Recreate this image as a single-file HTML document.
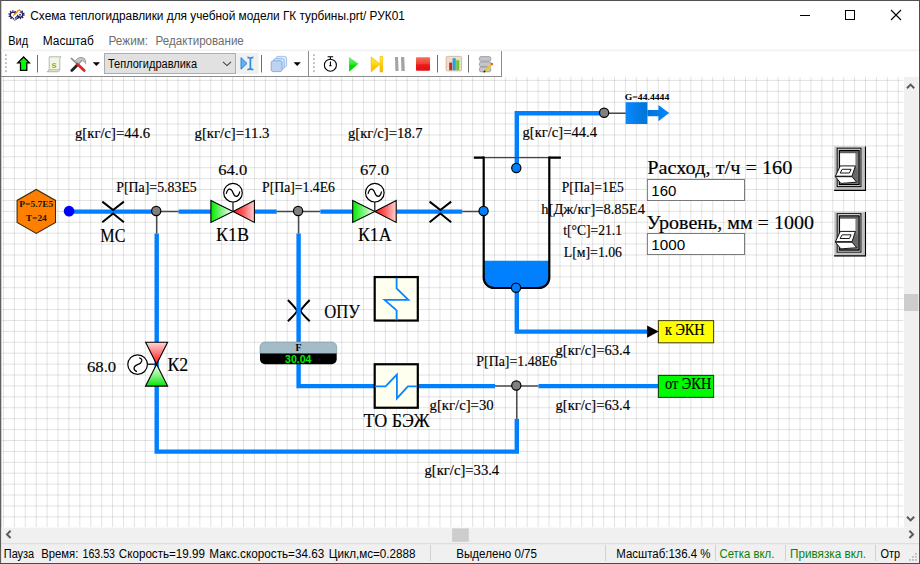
<!DOCTYPE html>
<html><head><meta charset="utf-8"><title>schema</title>
<style>
html,body{margin:0;padding:0;background:#fff;overflow:hidden;}
body{width:920px;height:564px;position:relative;font-family:"Liberation Sans",sans-serif;}
svg{position:absolute;left:0;top:0;display:block;}
text{white-space:pre;}
.ui{font-family:"Liberation Sans",sans-serif;font-size:12px;fill:#000;}
.sf{font-family:"Liberation Serif",serif;fill:#000;stroke:#000;stroke-width:0.16px;}
</style></head><body>
<svg width="920" height="564" viewBox="0 0 920 564">
<defs>
<linearGradient id="gG" x1="0" y1="0" x2="1" y2="0"><stop offset="0" stop-color="#00ea00"/><stop offset="0.5" stop-color="#84f484"/><stop offset="1" stop-color="#ffffff"/></linearGradient>
<linearGradient id="gR" x1="0" y1="0" x2="1" y2="0"><stop offset="0" stop-color="#ff1010"/><stop offset="0.5" stop-color="#ff6262"/><stop offset="1" stop-color="#ffd6d6"/></linearGradient>
<linearGradient id="gGv" x1="0" y1="0" x2="0" y2="1"><stop offset="0" stop-color="#ffffff"/><stop offset="0.5" stop-color="#8cf48c"/><stop offset="1" stop-color="#00e600"/></linearGradient>
<linearGradient id="gRv" x1="0" y1="0" x2="0" y2="1"><stop offset="0" stop-color="#ffd8d8"/><stop offset="0.55" stop-color="#ff6a6a"/><stop offset="1" stop-color="#ff1010"/></linearGradient>
<linearGradient id="gB" x1="0" y1="0" x2="1" y2="0"><stop offset="0" stop-color="#0a88ff"/><stop offset="1" stop-color="#0074d6"/></linearGradient>
<linearGradient id="gB2" x1="0" y1="0" x2="1" y2="0"><stop offset="0" stop-color="#0074d6"/><stop offset="1" stop-color="#0a88ff"/></linearGradient>
<linearGradient id="gP" x1="0" y1="0" x2="0" y2="1"><stop offset="0" stop-color="#7cf47c"/><stop offset="0.5" stop-color="#30e830"/><stop offset="0.55" stop-color="#00e000"/><stop offset="1" stop-color="#00cc00"/></linearGradient>
<linearGradient id="gY" x1="0" y1="0" x2="0" y2="1"><stop offset="0" stop-color="#ffe640"/><stop offset="0.5" stop-color="#ffd810"/><stop offset="0.55" stop-color="#ffcc00"/><stop offset="1" stop-color="#f8b800"/></linearGradient>
<linearGradient id="gS" x1="0" y1="0" x2="0" y2="1"><stop offset="0" stop-color="#f4705c"/><stop offset="0.5" stop-color="#ee4030"/><stop offset="0.55" stop-color="#ea1c1c"/><stop offset="1" stop-color="#e01010"/></linearGradient>
<clipPath id="cv"><rect x="2" y="77" width="901.5" height="450"/></clipPath>
</defs>

<rect x="0" y="0" width="920" height="564" fill="#ffffff"/>
<g clip-path="url(#cv)" shape-rendering="auto">
<path d="M3.45 77V527M14.36 77V527M25.27 77V527M36.19 77V527M47.10 77V527M58.01 77V527M68.92 77V527M79.83 77V527M90.75 77V527M101.66 77V527M112.57 77V527M123.48 77V527M134.39 77V527M145.31 77V527M156.22 77V527M167.13 77V527M178.04 77V527M188.95 77V527M199.87 77V527M210.78 77V527M221.69 77V527M232.60 77V527M243.51 77V527M254.43 77V527M265.34 77V527M276.25 77V527M287.16 77V527M298.07 77V527M308.99 77V527M319.90 77V527M330.81 77V527M341.72 77V527M352.63 77V527M363.55 77V527M374.46 77V527M385.37 77V527M396.28 77V527M407.19 77V527M418.11 77V527M429.02 77V527M439.93 77V527M450.84 77V527M461.75 77V527M472.67 77V527M483.58 77V527M494.49 77V527M505.40 77V527M516.31 77V527M527.23 77V527M538.14 77V527M549.05 77V527M559.96 77V527M570.87 77V527M581.79 77V527M592.70 77V527M603.61 77V527M614.52 77V527M625.43 77V527M636.35 77V527M647.26 77V527M658.17 77V527M669.08 77V527M679.99 77V527M690.91 77V527M701.82 77V527M712.73 77V527M723.64 77V527M734.55 77V527M745.47 77V527M756.38 77V527M767.29 77V527M778.20 77V527M789.11 77V527M800.03 77V527M810.94 77V527M821.85 77V527M832.76 77V527M843.67 77V527M854.59 77V527M865.50 77V527M876.41 77V527M887.32 77V527M898.23 77V527" stroke="#000" stroke-opacity="0.115" stroke-width="1" fill="none"/>
<path d="M2 80.40H903.5M2 91.31H903.5M2 102.22H903.5M2 113.14H903.5M2 124.05H903.5M2 134.96H903.5M2 145.87H903.5M2 156.78H903.5M2 167.70H903.5M2 178.61H903.5M2 189.52H903.5M2 200.43H903.5M2 211.34H903.5M2 222.26H903.5M2 233.17H903.5M2 244.08H903.5M2 254.99H903.5M2 265.90H903.5M2 276.82H903.5M2 287.73H903.5M2 298.64H903.5M2 309.55H903.5M2 320.46H903.5M2 331.38H903.5M2 342.29H903.5M2 353.20H903.5M2 364.11H903.5M2 375.02H903.5M2 385.94H903.5M2 396.85H903.5M2 407.76H903.5M2 418.67H903.5M2 429.58H903.5M2 440.50H903.5M2 451.41H903.5M2 462.32H903.5M2 473.23H903.5M2 484.14H903.5M2 495.06H903.5M2 505.97H903.5M2 516.88H903.5M2 527.79H903.5" stroke="#000" stroke-opacity="0.115" stroke-width="1" fill="none"/>
<path d="M287.9 300.0Q296.4 308.8 296.9 310.6T287.9 321.2M309.7 300.0Q301.2 308.8 300.7 310.6T309.7 321.2" stroke="#000" stroke-width="2.0" fill="none"/>
<path d="M69.4 211.6H152.7" stroke="#0080ff" stroke-width="4.4" fill="none" stroke-linejoin="miter"/>
<path d="M156.7 211.6H178.5" stroke="#484848" stroke-width="1.5" fill="none"/>
<path d="M178.5 211.6H211.3" stroke="#0080ff" stroke-width="4.4" fill="none" stroke-linejoin="miter"/>
<path d="M254.9 211.6H276.7" stroke="#0080ff" stroke-width="4.4" fill="none" stroke-linejoin="miter"/>
<path d="M276.7 211.6H320.4" stroke="#484848" stroke-width="1.5" fill="none"/>
<path d="M320.4 211.6H353.1" stroke="#0080ff" stroke-width="4.4" fill="none" stroke-linejoin="miter"/>
<path d="M396.8 211.6H462.2" stroke="#0080ff" stroke-width="4.4" fill="none" stroke-linejoin="miter"/>
<path d="M462.2 211.6H484.1" stroke="#484848" stroke-width="1.5" fill="none"/>
<path d="M156.7 211.6V233.4" stroke="#484848" stroke-width="1.5" fill="none"/>
<path d="M156.7 233.4V451.6H516.8V418.9" stroke="#0080ff" stroke-width="4.4" fill="none" stroke-linejoin="miter"/>
<path d="M516.8 418.9V386.1" stroke="#484848" stroke-width="1.5" fill="none"/>
<path d="M298.6 211.6V233.4" stroke="#484848" stroke-width="1.5" fill="none"/>
<path d="M298.6 233.4V386.1H375.4" stroke="#0080ff" stroke-width="4.4" fill="none" stroke-linejoin="miter"/>
<path d="M417.6 386.1H495.0" stroke="#0080ff" stroke-width="4.4" fill="none" stroke-linejoin="miter"/>
<path d="M495.0 386.1H538.6" stroke="#484848" stroke-width="1.5" fill="none"/>
<path d="M538.6 386.1H658.7" stroke="#0080ff" stroke-width="4.4" fill="none" stroke-linejoin="miter"/>
<path d="M516.8 167.9V113.3H600.1" stroke="#0080ff" stroke-width="4.4" fill="none" stroke-linejoin="miter"/>
<path d="M604.1 113.3H625.9" stroke="#484848" stroke-width="1.5" fill="none"/>
<path d="M516.8 287.9V331.6H647.7" stroke="#0080ff" stroke-width="4.4" fill="none" stroke-linejoin="miter"/>
<path d="M483.7 260.7H549.3V277.5A10.5 10.5 0 0 1 538.8 288.0H494.2A10.5 10.5 0 0 1 483.7 277.5Z" fill="#0080ff"/>
<path d="M473.9 157.6H560.8" stroke="#444" stroke-width="1.1" fill="none"/>
<path d="M473.9 157.6H483.7M549.3 157.6H560.8" stroke="#000" stroke-width="2.2" fill="none"/>
<path d="M483.7 156.5V277.5A10.5 10.5 0 0 0 494.2 288.0H538.8A10.5 10.5 0 0 0 549.3 277.5V156.5" stroke="#000" stroke-width="2.2" fill="none"/>
<path d="M102.3 201.6L113.1 210.1L123.9 201.6M102.3 222.2L113.1 213.5L123.9 222.2" stroke="#000" stroke-width="2.0" fill="none" stroke-linejoin="miter"/>
<path d="M429.6 201.6L440.4 210.1L451.2 201.6M429.6 222.2L440.4 213.5L451.2 222.2" stroke="#000" stroke-width="2.0" fill="none" stroke-linejoin="miter"/>
<circle cx="69.1" cy="211.2" r="5.35" fill="#0000ff"/>
<circle cx="156.2" cy="211.0" r="4.6" fill="#808080" stroke="#000" stroke-width="1.2"/>
<circle cx="298.1" cy="211.0" r="4.6" fill="#808080" stroke="#000" stroke-width="1.2"/>
<circle cx="483.6" cy="211.0" r="4.6" fill="#0080ff" stroke="#000" stroke-width="1.2"/>
<circle cx="516.3" cy="168.0" r="4.6" fill="#0080ff" stroke="#000" stroke-width="1.2"/>
<circle cx="516.0" cy="287.8" r="4.6" fill="#0080ff" stroke="#000" stroke-width="1.2"/>
<circle cx="604.1" cy="112.7" r="4.6" fill="#808080" stroke="#000" stroke-width="1.2"/>
<circle cx="516.3" cy="385.5" r="4.6" fill="#808080" stroke="#000" stroke-width="1.2"/>
<path d="M233.0 211.4V201.9" stroke="#000" stroke-width="1.1"/>
<path d="M210.9 200.4L233.0 211.4L210.9 222.4Z" fill="url(#gG)" stroke="#000" stroke-width="1.1" stroke-linejoin="miter"/>
<path d="M254.4 200.4L233.0 211.4L254.4 222.4Z" fill="url(#gR)" stroke="#000" stroke-width="1.1" stroke-linejoin="miter"/>
<circle cx="233.0" cy="192.7" r="9.3" fill="#fff" stroke="#000" stroke-width="1.2"/>
<path d="M226.2 193.9C227.8 187.2 231.4 188.1 233.0 192.7S238.2 198.2 239.8 191.5" stroke="#000" stroke-width="1.2" fill="none"/>
<path d="M374.8 211.4V201.9" stroke="#000" stroke-width="1.1"/>
<path d="M352.7 200.4L374.8 211.4L352.7 222.4Z" fill="url(#gG)" stroke="#000" stroke-width="1.1" stroke-linejoin="miter"/>
<path d="M396.2 200.4L374.8 211.4L396.2 222.4Z" fill="url(#gR)" stroke="#000" stroke-width="1.1" stroke-linejoin="miter"/>
<circle cx="374.8" cy="192.7" r="9.3" fill="#fff" stroke="#000" stroke-width="1.2"/>
<path d="M368.0 193.9C369.6 187.2 373.2 188.1 374.8 192.7S380.0 198.2 381.6 191.5" stroke="#000" stroke-width="1.2" fill="none"/>
<path d="M156.6 364.2H147.1" stroke="#000" stroke-width="1.2"/>
<path d="M145.6 342.3L156.6 364.2L167.6 342.3Z" fill="url(#gRv)" stroke="#000" stroke-width="1.1"/>
<path d="M145.6 386.1L156.6 364.2L167.6 386.1Z" fill="url(#gGv)" stroke="#000" stroke-width="1.1"/>
<circle cx="137.6" cy="364.6" r="9.8" fill="#fff" stroke="#000" stroke-width="1.2"/>
<path d="M139.2 357.8C143.8 359.0 141.8 363.4 137.6 364.6S132.6 370.2 137.0 371.6" stroke="#000" stroke-width="1.2" fill="none"/>
<path d="M36.3 189.4L55.5 200.4V222.4L36.3 233.4L17.1 222.4V200.4Z" fill="#ff8000" stroke="#3a2a10" stroke-width="1.1"/>
<rect x="625.6" y="102.2" width="21.8" height="21.8" fill="url(#gB)"/>
<path d="M647.4 109.9H658.4V104.9L669.2 113.1L658.4 121.3V116.3H647.4Z" fill="url(#gB2)"/>
<rect x="374.70" y="277.05" width="43.1" height="43.5" fill="#fffff0" stroke="#000" stroke-width="2.2"/>
<path d="M396.6 277.8V288.4L408.4 299.9H384.6L396.6 310.4V320.3" stroke="#0a84ff" stroke-width="1.8" fill="none"/>
<rect x="374.70" y="364.25" width="43.1" height="43.5" fill="#fffff0" stroke="#000" stroke-width="2.2"/>
<path d="M375.2 386.4H385.6L396.9 374.6V398.4L407.9 386.4H417.2" stroke="#0a84ff" stroke-width="1.8" fill="none"/>
<path d="M265.0 342.1H331.7A5 5 0 0 1 336.7 347.1V353.5H260.0V347.1A5 5 0 0 1 265.0 342.1Z" fill="#a3bcc8" stroke="#8399a3" stroke-width="0.7"/>
<path d="M260.0 353.5H336.7V359.2A5 5 0 0 1 331.7 364.2H265.0A5 5 0 0 1 260.0 359.2Z" fill="#000"/>
<rect x="658.4" y="320.6" width="55.2" height="22.2" fill="#ffff00" stroke="#4a4a10" stroke-width="1.1"/>
<rect x="658.4" y="375.4" width="55.2" height="22.0" fill="#00fa00" stroke="#0c4a0c" stroke-width="1.1"/>
<path d="M647.1 325.4L658.7 331.6L647.1 337.8Z" fill="#000"/>
<rect x="647.4" y="179.5" width="97.1" height="21.0" fill="#fff" stroke="#7a7a7a" stroke-width="1"/>
<rect x="647.4" y="233.5" width="97.1" height="21.0" fill="#fff" stroke="#7a7a7a" stroke-width="1"/>
<rect x="834.10" y="146.40" width="31.9" height="44.5" fill="#c0c0c0"/>
<polyline points="834.50,190.40 834.50,146.80 865.50,146.80" fill="none" stroke="#d8d8d8" stroke-width="0.8"/>
<polyline points="834.10,190.40 865.50,190.40 865.50,146.40" fill="none" stroke="#000" stroke-width="1.1"/>
<rect x="837.20" y="148.20" width="23.7" height="38.4" fill="#fff" stroke="#000" stroke-width="1.0"/>
<rect x="839.30" y="150.40" width="19.8" height="34.2" fill="#808080" stroke="#000" stroke-width="1.3"/>
<rect x="840.10" y="151.10" width="17.6" height="2.2" fill="#5e5e5e"/>
<polygon points="840.10,153.30 855.40,153.30 855.40,166.00 840.10,166.00" fill="#fff"/>
<polygon points="855.40,165.90 858.10,171.20 858.10,182.80 852.10,176.40" fill="#6a6a6a"/>
<polygon points="840.30,165.90 855.40,165.90 852.00,176.20 835.40,176.20" fill="#fff" stroke="#000" stroke-width="0.9" stroke-linejoin="round"/>
<polygon points="842.20,169.30 851.10,169.30 849.40,173.00 840.10,173.00" fill="#fff" stroke="#000" stroke-width="0.9"/>
<polygon points="835.40,176.70 852.00,176.70 856.70,182.20 840.90,183.40" fill="#fff" stroke="#000" stroke-width="0.9" stroke-linejoin="round"/>
<rect x="834.10" y="211.90" width="31.9" height="44.5" fill="#c0c0c0"/>
<polyline points="834.50,255.90 834.50,212.30 865.50,212.30" fill="none" stroke="#d8d8d8" stroke-width="0.8"/>
<polyline points="834.10,255.90 865.50,255.90 865.50,211.90" fill="none" stroke="#000" stroke-width="1.1"/>
<rect x="837.20" y="213.70" width="23.7" height="38.4" fill="#fff" stroke="#000" stroke-width="1.0"/>
<rect x="839.30" y="215.90" width="19.8" height="34.2" fill="#808080" stroke="#000" stroke-width="1.3"/>
<rect x="840.10" y="216.60" width="17.6" height="2.2" fill="#5e5e5e"/>
<polygon points="840.10,218.80 855.40,218.80 855.40,231.50 840.10,231.50" fill="#fff"/>
<polygon points="855.40,231.40 858.10,236.70 858.10,248.30 852.10,241.90" fill="#6a6a6a"/>
<polygon points="840.30,231.40 855.40,231.40 852.00,241.70 835.40,241.70" fill="#fff" stroke="#000" stroke-width="0.9" stroke-linejoin="round"/>
<polygon points="842.20,234.80 851.10,234.80 849.40,238.50 840.10,238.50" fill="#fff" stroke="#000" stroke-width="0.9"/>
<polygon points="835.40,242.20 852.00,242.20 856.70,247.70 840.90,248.90" fill="#fff" stroke="#000" stroke-width="0.9" stroke-linejoin="round"/>
<text class="sf" x="75.0" y="137.5" font-size="14.7" textLength="75.0" lengthAdjust="spacingAndGlyphs">g[кг/с]=44.6</text>
<text class="sf" x="194.5" y="137.5" font-size="14.7" textLength="75.0" lengthAdjust="spacingAndGlyphs">g[кг/с]=11.3</text>
<text class="sf" x="348.0" y="137.5" font-size="14.7" textLength="74.5" lengthAdjust="spacingAndGlyphs">g[кг/с]=18.7</text>
<text class="sf" x="522.5" y="137.3" font-size="14.7" textLength="74.5" lengthAdjust="spacingAndGlyphs">g[кг/с]=44.4</text>
<text class="sf" x="116.3" y="192.0" font-size="14.7" textLength="80.5" lengthAdjust="spacingAndGlyphs">P[Па]=5.83E5</text>
<text class="sf" x="262.0" y="192.0" font-size="14.7" textLength="73.0" lengthAdjust="spacingAndGlyphs">P[Па]=1.4E6</text>
<text class="sf" x="561.8" y="191.8" font-size="14.7" textLength="62.0" lengthAdjust="spacingAndGlyphs">P[Па]=1E5</text>
<text class="sf" x="541.3" y="213.8" font-size="14.7" textLength="103.7" lengthAdjust="spacingAndGlyphs">h[Дж/кг]=8.85E4</text>
<text class="sf" x="563.3" y="235.0" font-size="14.7" textLength="58.7" lengthAdjust="spacingAndGlyphs">t[°C]=21.1</text>
<text class="sf" x="563.8" y="256.8" font-size="14.7" textLength="58.2" lengthAdjust="spacingAndGlyphs">L[м]=1.06</text>
<text class="sf" x="555.5" y="355.0" font-size="14.7" textLength="74.5" lengthAdjust="spacingAndGlyphs">g[кг/с]=63.4</text>
<text class="sf" x="555.5" y="410.0" font-size="14.7" textLength="74.5" lengthAdjust="spacingAndGlyphs">g[кг/с]=63.4</text>
<text class="sf" x="476.3" y="365.7" font-size="14.7" textLength="80.7" lengthAdjust="spacingAndGlyphs">P[Па]=1.48E6</text>
<text class="sf" x="429.5" y="410.0" font-size="14.7" textLength="64.2" lengthAdjust="spacingAndGlyphs">g[кг/с]=30</text>
<text class="sf" x="424.5" y="474.5" font-size="14.7" textLength="74.7" lengthAdjust="spacingAndGlyphs">g[кг/с]=33.4</text>
<text class="sf" x="218.2" y="174.7" font-size="15.2" textLength="29.0" lengthAdjust="spacingAndGlyphs">64.0</text>
<text class="sf" x="360.0" y="174.8" font-size="15.2" textLength="29.1" lengthAdjust="spacingAndGlyphs">67.0</text>
<text class="sf" x="87.0" y="371.8" font-size="15.2" textLength="29.2" lengthAdjust="spacingAndGlyphs">68.0</text>
<text class="sf" x="100.3" y="242.2" font-size="19.3" textLength="25.1" lengthAdjust="spacingAndGlyphs">МС</text>
<text class="sf" x="216.0" y="241.2" font-size="19.3" textLength="33.1" lengthAdjust="spacingAndGlyphs">К1В</text>
<text class="sf" x="358.0" y="241.1" font-size="19.3" textLength="33.6" lengthAdjust="spacingAndGlyphs">К1А</text>
<text class="sf" x="167.4" y="370.7" font-size="19.3" textLength="20.8" lengthAdjust="spacingAndGlyphs">К2</text>
<text class="sf" x="324.3" y="317.5" font-size="19.3" textLength="35.8" lengthAdjust="spacingAndGlyphs">ОПУ</text>
<text class="sf" x="363.4" y="426.8" font-size="19.3" textLength="66.2" lengthAdjust="spacingAndGlyphs">ТО БЭЖ</text>
<text class="sf" x="647.2" y="174.3" font-size="19.0" textLength="145.2" lengthAdjust="spacingAndGlyphs">Расход, т/ч = 160</text>
<text class="sf" x="646.6" y="229.3" font-size="19.0" textLength="167.4" lengthAdjust="spacingAndGlyphs">Уровень, мм = 1000</text>
<text class="sf" x="665.0" y="335.2" font-size="15.7" textLength="39.5" lengthAdjust="spacingAndGlyphs">к ЭКН</text>
<text class="sf" x="665.0" y="389.2" font-size="15.7" textLength="46.3" lengthAdjust="spacingAndGlyphs">от ЭКН</text>
<text class="sf" x="624.8" y="100.0" font-size="8.4" textLength="44.5" lengthAdjust="spacingAndGlyphs" font-weight="bold" style="stroke:none">G=44.4444</text>
<text class="sf" x="36.3" y="207.0" font-size="8.6" textLength="34.0" lengthAdjust="spacingAndGlyphs" text-anchor="middle" font-weight="bold" style="stroke:none;fill:#1a1208">P=5.7E5</text>
<text class="sf" x="36.3" y="220.8" font-size="8.6" textLength="21.0" lengthAdjust="spacingAndGlyphs" text-anchor="middle" font-weight="bold" style="stroke:none;fill:#1a1208">T=24</text>
<text class="sf" x="298.5" y="350.9" font-size="9.8" text-anchor="middle" font-weight="bold" style="stroke:none">F</text>
<text x="298.2" y="363.0" font-family="Liberation Sans" font-weight="bold" font-size="10.4" fill="#00ee00" text-anchor="middle" textLength="26.3" lengthAdjust="spacingAndGlyphs">30.04</text>
<text class="ui" x="651.3" y="195.6" textLength="25" lengthAdjust="spacingAndGlyphs" style="font-size:15.2px">160</text>
<text class="ui" x="651.3" y="249.6" textLength="33.8" lengthAdjust="spacingAndGlyphs" style="font-size:15.2px">1000</text>
</g>
<rect x="0" y="0" width="920" height="1" fill="#505050"/>
<rect x="0" y="0" width="1" height="564" fill="#5e5e5e"/>
<rect x="1" y="1" width="0.5" height="562" fill="#9a9a9a"/>
<rect x="919" y="0" width="1" height="564" fill="#4c4c4c"/>
<rect x="0" y="563" width="920" height="1" fill="#4a4a4a"/>
<g>
<circle cx="13.0" cy="14.9" r="3.9" fill="none" stroke="#1c1c5c" stroke-width="1.5" stroke-dasharray="1.25 1.2"/>
<circle cx="20.0" cy="14.6" r="3.9" fill="none" stroke="#1c1c5c" stroke-width="1.5" stroke-dasharray="1.25 1.2"/>
<circle cx="13.0" cy="14.9" r="2.7" fill="none" stroke="#1c1c5c" stroke-width="1.3"/>
<circle cx="20.0" cy="14.6" r="2.7" fill="none" stroke="#1c1c5c" stroke-width="1.3"/>
<circle cx="20.0" cy="14.6" r="0.9" fill="#1c1c5c"/>
<path d="M12.6 17.2L19.2 10.2L20.6 11.6L14.2 18.6Z" fill="#fff"/>
<path d="M13.2 15.6L19.8 9.4" stroke="#ff8c00" stroke-width="1.25"/>
<path d="M14.2 20.4L19.4 15.4M15.6 20.2L20.4 15.8" stroke="#1c1c5c" stroke-width="0.8"/>
</g>
<text class="ui" x="30.3" y="19.6" textLength="374.5" lengthAdjust="spacingAndGlyphs">Схема теплогидравлики для учебной модели ГК турбины.prt/ РУК01</text>
<path d="M800 15.5H810" stroke="#000" stroke-width="1"/>
<rect x="845.5" y="10.5" width="9" height="9" fill="none" stroke="#000" stroke-width="1"/>
<path d="M891 10L901 20M901 10L891 20" stroke="#000" stroke-width="1.1"/>
<text class="ui" x="8.3" y="44.5" textLength="19.8" lengthAdjust="spacingAndGlyphs">Вид</text>
<text class="ui" x="42.8" y="44.5" textLength="51" lengthAdjust="spacingAndGlyphs">Масштаб</text>
<text class="ui" x="108.5" y="44.5" textLength="39.6" lengthAdjust="spacingAndGlyphs" style="fill:#6d6d6d">Режим:</text>
<text class="ui" x="155.6" y="44.5" textLength="88.2" lengthAdjust="spacingAndGlyphs" style="fill:#6d6d6d">Редактирование</text>
<rect x="1" y="49.6" width="918" height="1.5" fill="#f0f0f0"/>
<path d="M1 76.5H502M308.5 51V76M501.5 51V76" stroke="#8c8c8c" stroke-width="1" fill="none"/>
<rect x="5" y="54.3" width="1.8" height="1.8" fill="#b8b8b8"/>
<rect x="5" y="58.3" width="1.8" height="1.8" fill="#b8b8b8"/>
<rect x="5" y="62.3" width="1.8" height="1.8" fill="#b8b8b8"/>
<rect x="5" y="66.3" width="1.8" height="1.8" fill="#b8b8b8"/>
<rect x="5" y="70.3" width="1.8" height="1.8" fill="#b8b8b8"/>
<rect x="313" y="54.3" width="1.8" height="1.8" fill="#b8b8b8"/>
<rect x="313" y="58.3" width="1.8" height="1.8" fill="#b8b8b8"/>
<rect x="313" y="62.3" width="1.8" height="1.8" fill="#b8b8b8"/>
<rect x="313" y="66.3" width="1.8" height="1.8" fill="#b8b8b8"/>
<rect x="313" y="70.3" width="1.8" height="1.8" fill="#b8b8b8"/>
<path d="M37.5 55V72.5" stroke="#6e6e6e" stroke-width="1"/>
<path d="M261.5 55V72.5" stroke="#6e6e6e" stroke-width="1"/>
<path d="M437.5 55V72.5" stroke="#6e6e6e" stroke-width="1"/>
<path d="M468.5 55V72.5" stroke="#6e6e6e" stroke-width="1"/>
<path d="M23.6 57L29.4 62.8H26.8V70.3H20.5V62.8H17.8Z" fill="#00ff00" stroke="#000" stroke-width="1.3" stroke-linejoin="miter"/>
<g>
<path d="M49.2 56.8H61Q59.8 58 59.8 59.6V69.4Q59.8 70.8 58.6 71.6H47.4Q49.2 70.6 49.2 69Z" fill="#f1f6e8" stroke="#a9b79a" stroke-width="0.9"/>
<path d="M47 71.7H58.4Q59.9 70.9 59.7 69.6H49.2Q49 71 47 71.7Z" fill="#dbe5cd" stroke="#a9b79a" stroke-width="0.7"/>
<text x="51.4" y="68" font-family="Liberation Sans" font-size="9" fill="#a0a832" font-weight="bold">s</text>
</g>
<g stroke-linecap="round">
<path d="M71.4 58.4L77.6 64.4" stroke="#8c8c8c" stroke-width="1.5"/>
<path d="M71.8 70.4L77.8 64.4" stroke="#222" stroke-width="2.8"/>
<path d="M77.8 64.4L81 61" stroke="#8e8e8e" stroke-width="1.8"/>
<path d="M77.6 64.2L84.2 70.6" stroke="#d82a2a" stroke-width="2.8"/>
<path d="M75.6 60.2Q79.6 55.4 84.6 58.6Q86 60.4 85.6 63.6Q84.2 60.2 81.4 60.6L78.8 63.2Z" fill="#c4c4c4" stroke="#8a8a8a" stroke-width="0.7" stroke-linejoin="round"/>
</g>
<path d="M92.8 62.2H100L96.4 66Z" fill="#000"/>
<rect x="104.5" y="53.5" width="131" height="20" fill="#e1e1e1" stroke="#adadad" stroke-width="1"/>
<text class="ui" x="108" y="67.6" textLength="89" lengthAdjust="spacingAndGlyphs">Теплогидравлика</text>
<path d="M223 61.8L227 65.6L231 61.8" stroke="#404040" stroke-width="1.1" fill="none"/>
<rect x="236.2" y="53" width="22.5" height="21" fill="#f0f0f0"/>
<path d="M241 57.6L247 63.4L241 69.2Z" fill="#62b0ee" stroke="#1f7fd6" stroke-width="0.9"/>
<path d="M247.4 57.4Q249.6 57.4 250.4 58.6Q251.2 57.4 253.4 57.4M247.4 69.6Q249.6 69.6 250.4 68.4Q251.2 69.6 253.4 69.6M250.4 58.6V68.4" stroke="#2c8ae0" stroke-width="1.7" fill="none"/>
<g>
<rect x="276" y="56.4" width="10.6" height="10.6" rx="2" fill="#e2ecf9" stroke="#9bbce6" stroke-width="0.9"/>
<rect x="273.6" y="58.6" width="10.6" height="10.6" rx="2" fill="#d2e2f6" stroke="#8fb4e4" stroke-width="0.9"/>
<rect x="271.2" y="60.8" width="10.8" height="10.8" rx="2" fill="#bcd4f2" stroke="#7fa8e0" stroke-width="0.9"/>
</g>
<path d="M293.6 62.2H300.8L297.2 66Z" fill="#000"/>
<circle cx="330.4" cy="65.2" r="6.0" fill="#fff" stroke="#000" stroke-width="1.1"/>
<path d="M327.6 56.8H333.2M330.4 57V59.2M330.4 61.4V65.6M329.2 65.8H331.6" stroke="#000" stroke-width="1.1" fill="none"/>
<path d="M348.9 56.8L358.4 63.8L349.2 71.8Z" fill="url(#gP)"/>
<path d="M371 56.8L380.2 64L371.2 72Z" fill="url(#gY)" stroke="#eeb000" stroke-width="0.5"/>
<rect x="380" y="56.6" width="2.8" height="15.4" fill="url(#gY)" stroke="#eeb000" stroke-width="0.5"/>
<path d="M395 57H398L398.6 71H395.4Z" fill="#a4a4a4"/><path d="M401 57H404.2L404.8 71H401.4Z" fill="#a4a4a4"/>
<rect x="416" y="57.2" width="14" height="13.6" rx="1" fill="url(#gS)"/>
<g>
<rect x="446.2" y="56.4" width="15.4" height="14.4" rx="1" fill="#efe4d2" stroke="#c8ac8c" stroke-width="0.8"/>
<path d="M447 59H461M447 61.5H461M447 64H461M447 66.5H461" stroke="#dccbb0" stroke-width="0.6"/>
<rect x="449.2" y="62.6" width="3" height="7.6" fill="#d81e2a"/>
<rect x="452.6" y="58.2" width="3.2" height="12" fill="#28a0e6"/>
<rect x="456.2" y="60.2" width="3" height="10" fill="#6cc832"/>
</g>
<g>
<rect x="479.4" y="56.6" width="11.4" height="4.6" rx="1.6" fill="#c4c6cc" stroke="#8c8e94" stroke-width="0.7"/>
<rect x="479.4" y="61.9" width="11.4" height="4.6" rx="1.6" fill="#c4c6cc" stroke="#8c8e94" stroke-width="0.7"/>
<rect x="479.4" y="67.2" width="11.4" height="4.6" rx="1.6" fill="#c4c6cc" stroke="#8c8e94" stroke-width="0.7"/>
<path d="M484.4 71.4L491.4 64.4" stroke="#e8c63c" stroke-width="2.2"/>
<path d="M491.2 64.6L492.6 63.2" stroke="#e64646" stroke-width="2.2"/>
<path d="M483.6 72.2L485.2 70.8" stroke="#222" stroke-width="1.4"/>
</g>
<rect x="904" y="77" width="14.6" height="450.5" fill="#f0f0f0"/>
<rect x="1.4" y="527.6" width="917.2" height="15.6" fill="#f0f0f0"/>
<rect x="904" y="294" width="14.4" height="17" fill="#cdcdcd"/>
<rect x="452.2" y="528.4" width="16.6" height="13.4" fill="#cdcdcd"/>
<path d="M907 88.2L910.6 84.6L914.2 88.2" stroke="#5a5a5a" stroke-width="2.0" fill="none"/>
<path d="M907 516.8L910.6 520.4L914.2 516.8" stroke="#5a5a5a" stroke-width="2.0" fill="none"/>
<path d="M909.4 530.8L913 534.4L909.4 538" stroke="#5a5a5a" stroke-width="2.0" fill="none"/>
<path d="M10.6 530.8L7 534.4L10.6 538" stroke="#5a5a5a" stroke-width="2.0" fill="none"/>
<rect x="1.4" y="543.2" width="917.6" height="19.8" fill="#f0f0f0"/>
<rect x="1.4" y="543.2" width="917.6" height="1" fill="#d7d7d7"/>
<path d="M430.5 545V561" stroke="#d2d2d2" stroke-width="1"/>
<path d="M605.5 545V561" stroke="#d2d2d2" stroke-width="1"/>
<path d="M715.5 545V561" stroke="#d2d2d2" stroke-width="1"/>
<path d="M785.5 545V561" stroke="#d2d2d2" stroke-width="1"/>
<path d="M875.5 545V561" stroke="#d2d2d2" stroke-width="1"/>
<text class="ui" x="3.8" y="558" textLength="30.4" lengthAdjust="spacingAndGlyphs" style="fill:#000">Пауза</text>
<text class="ui" x="41.3" y="558" textLength="37" lengthAdjust="spacingAndGlyphs" style="fill:#000">Время:</text>
<text class="ui" x="82.5" y="558" textLength="32.5" lengthAdjust="spacingAndGlyphs" style="fill:#000">163.53</text>
<text class="ui" x="118.8" y="558" textLength="86.2" lengthAdjust="spacingAndGlyphs" style="fill:#000">Скорость=19.99</text>
<text class="ui" x="209.3" y="558" textLength="115" lengthAdjust="spacingAndGlyphs" style="fill:#000">Макс.скорость=34.63</text>
<text class="ui" x="328.8" y="558" textLength="86.7" lengthAdjust="spacingAndGlyphs" style="fill:#000">Цикл,мс=0.2888</text>
<text class="ui" x="456.3" y="558" textLength="80.7" lengthAdjust="spacingAndGlyphs" style="fill:#000">Выделено 0/75</text>
<text class="ui" x="616.3" y="558" textLength="94.2" lengthAdjust="spacingAndGlyphs" style="fill:#000">Масштаб:136.4 %</text>
<text class="ui" x="719.5" y="558" textLength="54.8" lengthAdjust="spacingAndGlyphs" style="fill:#0a820a">Сетка вкл.</text>
<text class="ui" x="790" y="558" textLength="76" lengthAdjust="spacingAndGlyphs" style="fill:#0a820a">Привязка вкл.</text>
<text class="ui" x="880.6" y="558" textLength="19.6" lengthAdjust="spacingAndGlyphs" style="fill:#000">Отр</text>
<rect x="915" y="559" width="1.8" height="1.8" fill="#bcbcbc"/>
<rect x="912" y="559" width="1.8" height="1.8" fill="#bcbcbc"/>
<rect x="909" y="559" width="1.8" height="1.8" fill="#bcbcbc"/>
<rect x="915" y="556" width="1.8" height="1.8" fill="#bcbcbc"/>
<rect x="912" y="556" width="1.8" height="1.8" fill="#bcbcbc"/>
<rect x="915" y="553" width="1.8" height="1.8" fill="#bcbcbc"/>
</svg></body></html>
